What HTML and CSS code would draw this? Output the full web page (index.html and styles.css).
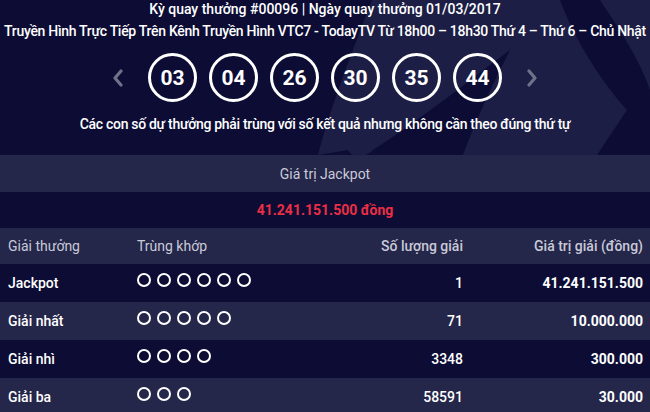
FILE: index.html
```html
<!DOCTYPE html>
<html lang="vi">
<head>
<meta charset="utf-8">
<title>Kết quả Mega 6/45</title>
<link rel="stylesheet" href="styles.css">
</head>
<body>
<div class="page">
  <svg class="deco" width="650" height="155" viewBox="0 0 650 155" aria-hidden="true">
    <path class="deco-fill" d="M318 155 C330 110 345 70 372 0 L560 0 C575 40 600 80 627 110 L597 155 L463 155 C480 110 495 80 510 50 C470 80 420 120 373 150 C365 158 352 158 348 150 Z"/>
    <path class="deco-fill" d="M600 0 L650 0 L650 90 C640 60 620 30 600 0 Z"/>
  </svg>
  <header class="draw">
    <p class="draw-title">Kỳ quay thưởng #00096 | Ngày quay thưởng 01/03/2017</p>
    <p class="draw-sub">Truyền Hình Trực Tiếp Trên Kênh Truyền Hình VTC7 - TodayTV Từ 18h00 – 18h30 Thứ 4 – Thứ 6 – Chủ Nhật</p>
    <div class="balls">
      <svg class="arrow" width="14" height="18" viewBox="0 0 14 18"><path d="M10 2 L4 9 L10 16" /></svg>
      <span class="ball">03</span>
      <span class="ball">04</span>
      <span class="ball">26</span>
      <span class="ball">30</span>
      <span class="ball">35</span>
      <span class="ball">44</span>
      <svg class="arrow" width="14" height="18" viewBox="0 0 14 18"><path d="M4 2 L10 9 L4 16" /></svg>
    </div>
    <p class="note">Các con số dự thưởng phải trùng với số kết quả nhưng không cần theo đúng thứ tự</p>
  </header>
  <div class="jackpot-label">Giá trị Jackpot</div>
  <div class="jackpot-value">41.241.151.500 đồng</div>
  <div class="prizes">
    <div class="row head">
      <span>Giải thưởng</span>
      <span>Trùng khớp</span>
      <span class="num">Số lượng giải</span>
      <span class="num">Giá trị giải (đồng)</span>
    </div>
    <div class="row dark">
      <span class="name">Jackpot</span>
      <span class="dots"><i></i><i></i><i></i><i></i><i></i><i></i></span>
      <span class="num">1</span>
      <span class="num val">41.241.151.500</span>
    </div>
    <div class="row light">
      <span class="name">Giải nhất</span>
      <span class="dots"><i></i><i></i><i></i><i></i><i></i></span>
      <span class="num">71</span>
      <span class="num val">10.000.000</span>
    </div>
    <div class="row dark">
      <span class="name">Giải nhì</span>
      <span class="dots"><i></i><i></i><i></i><i></i></span>
      <span class="num">3348</span>
      <span class="num val">300.000</span>
    </div>
    <div class="row light">
      <span class="name">Giải ba</span>
      <span class="dots"><i></i><i></i><i></i></span>
      <span class="num">58591</span>
      <span class="num val">30.000</span>
    </div>
  </div>
</div>
</body>
</html>
```

FILE: styles.css
```css
* { box-sizing: border-box; }
html, body {
  margin: 0;
  padding: 0;
  background: #0c0c34;
}
body {
  font-family: Roboto, "Noto Sans", "Liberation Sans", sans-serif;
  color: #ffffff;
  width: 650px;
  height: 412px;
  overflow: hidden;
}
.page {
  position: relative;
  width: 650px;
}
.deco {
  position: absolute;
  left: 0;
  top: 0;
  z-index: 0;
}
.deco-fill { fill: #1d1e46; }
.draw {
  position: relative;
  z-index: 1;
  height: 155px;
  display: flex;
  flex-direction: column;
  align-items: center;
}
.draw p { margin: 0; }
.draw-title {
  font-size: 14px;
  font-weight: 500;
  line-height: 18px;
  margin-top: 0;
}
.draw-sub {
  font-size: 14px;
  font-weight: 500;
  line-height: 18px;
  margin-top: 4px !important;
  letter-spacing: -0.3px;
  white-space: nowrap;
}
.balls {
  display: flex;
  align-items: center;
  gap: 12px;
  margin-top: 13px !important;
}
.arrow {
  fill: none;
  stroke: #6f7089;
  stroke-width: 3.2;
  stroke-linecap: round;
  stroke-linejoin: round;
}
.arrow:first-child { margin-right: 11px; }
.arrow:last-child { margin-left: 11px; }
.ball {
  width: 49px;
  height: 49px;
  border: 3px solid #ffffff;
  border-radius: 50%;
  display: flex;
  align-items: center;
  justify-content: center;
  font-size: 21px;
  font-weight: 700;
}
.note {
  font-size: 14px;
  font-weight: 500;
  line-height: 18px;
  letter-spacing: -0.3px;
  margin-top: 13px !important;
}
.jackpot-label {
  position: relative;
  z-index: 1;
  background: #24264a;
  height: 37px;
  display: flex;
  align-items: center;
  justify-content: center;
  font-size: 14px;
  color: #c9cad8;
}
.jackpot-value {
  height: 36px;
  display: flex;
  align-items: center;
  justify-content: center;
  font-size: 14px;
  font-weight: 700;
  color: #ea2f45;
}
.row {
  display: grid;
  grid-template-columns: 129px 206px 120px 180px;
  padding: 0 7px 0 8px;
  align-items: center;
  height: 38px;
  font-size: 14px;
}
.row.head {
  height: 36px;
  background: #24264a;
  color: #c9cad8;
}
.row.light { background: #24264a; }
.row.dark { background: #0c0c34; }
.name { font-weight: 500; }
.num { text-align: right; font-weight: 500; }
.val { font-weight: 700; }
.dots {
  display: flex;
  gap: 6px;
  margin-top: -6px;
}
.dots i {
  width: 14px;
  height: 14px;
  border: 2px solid #ffffff;
  border-radius: 50%;
}
```
